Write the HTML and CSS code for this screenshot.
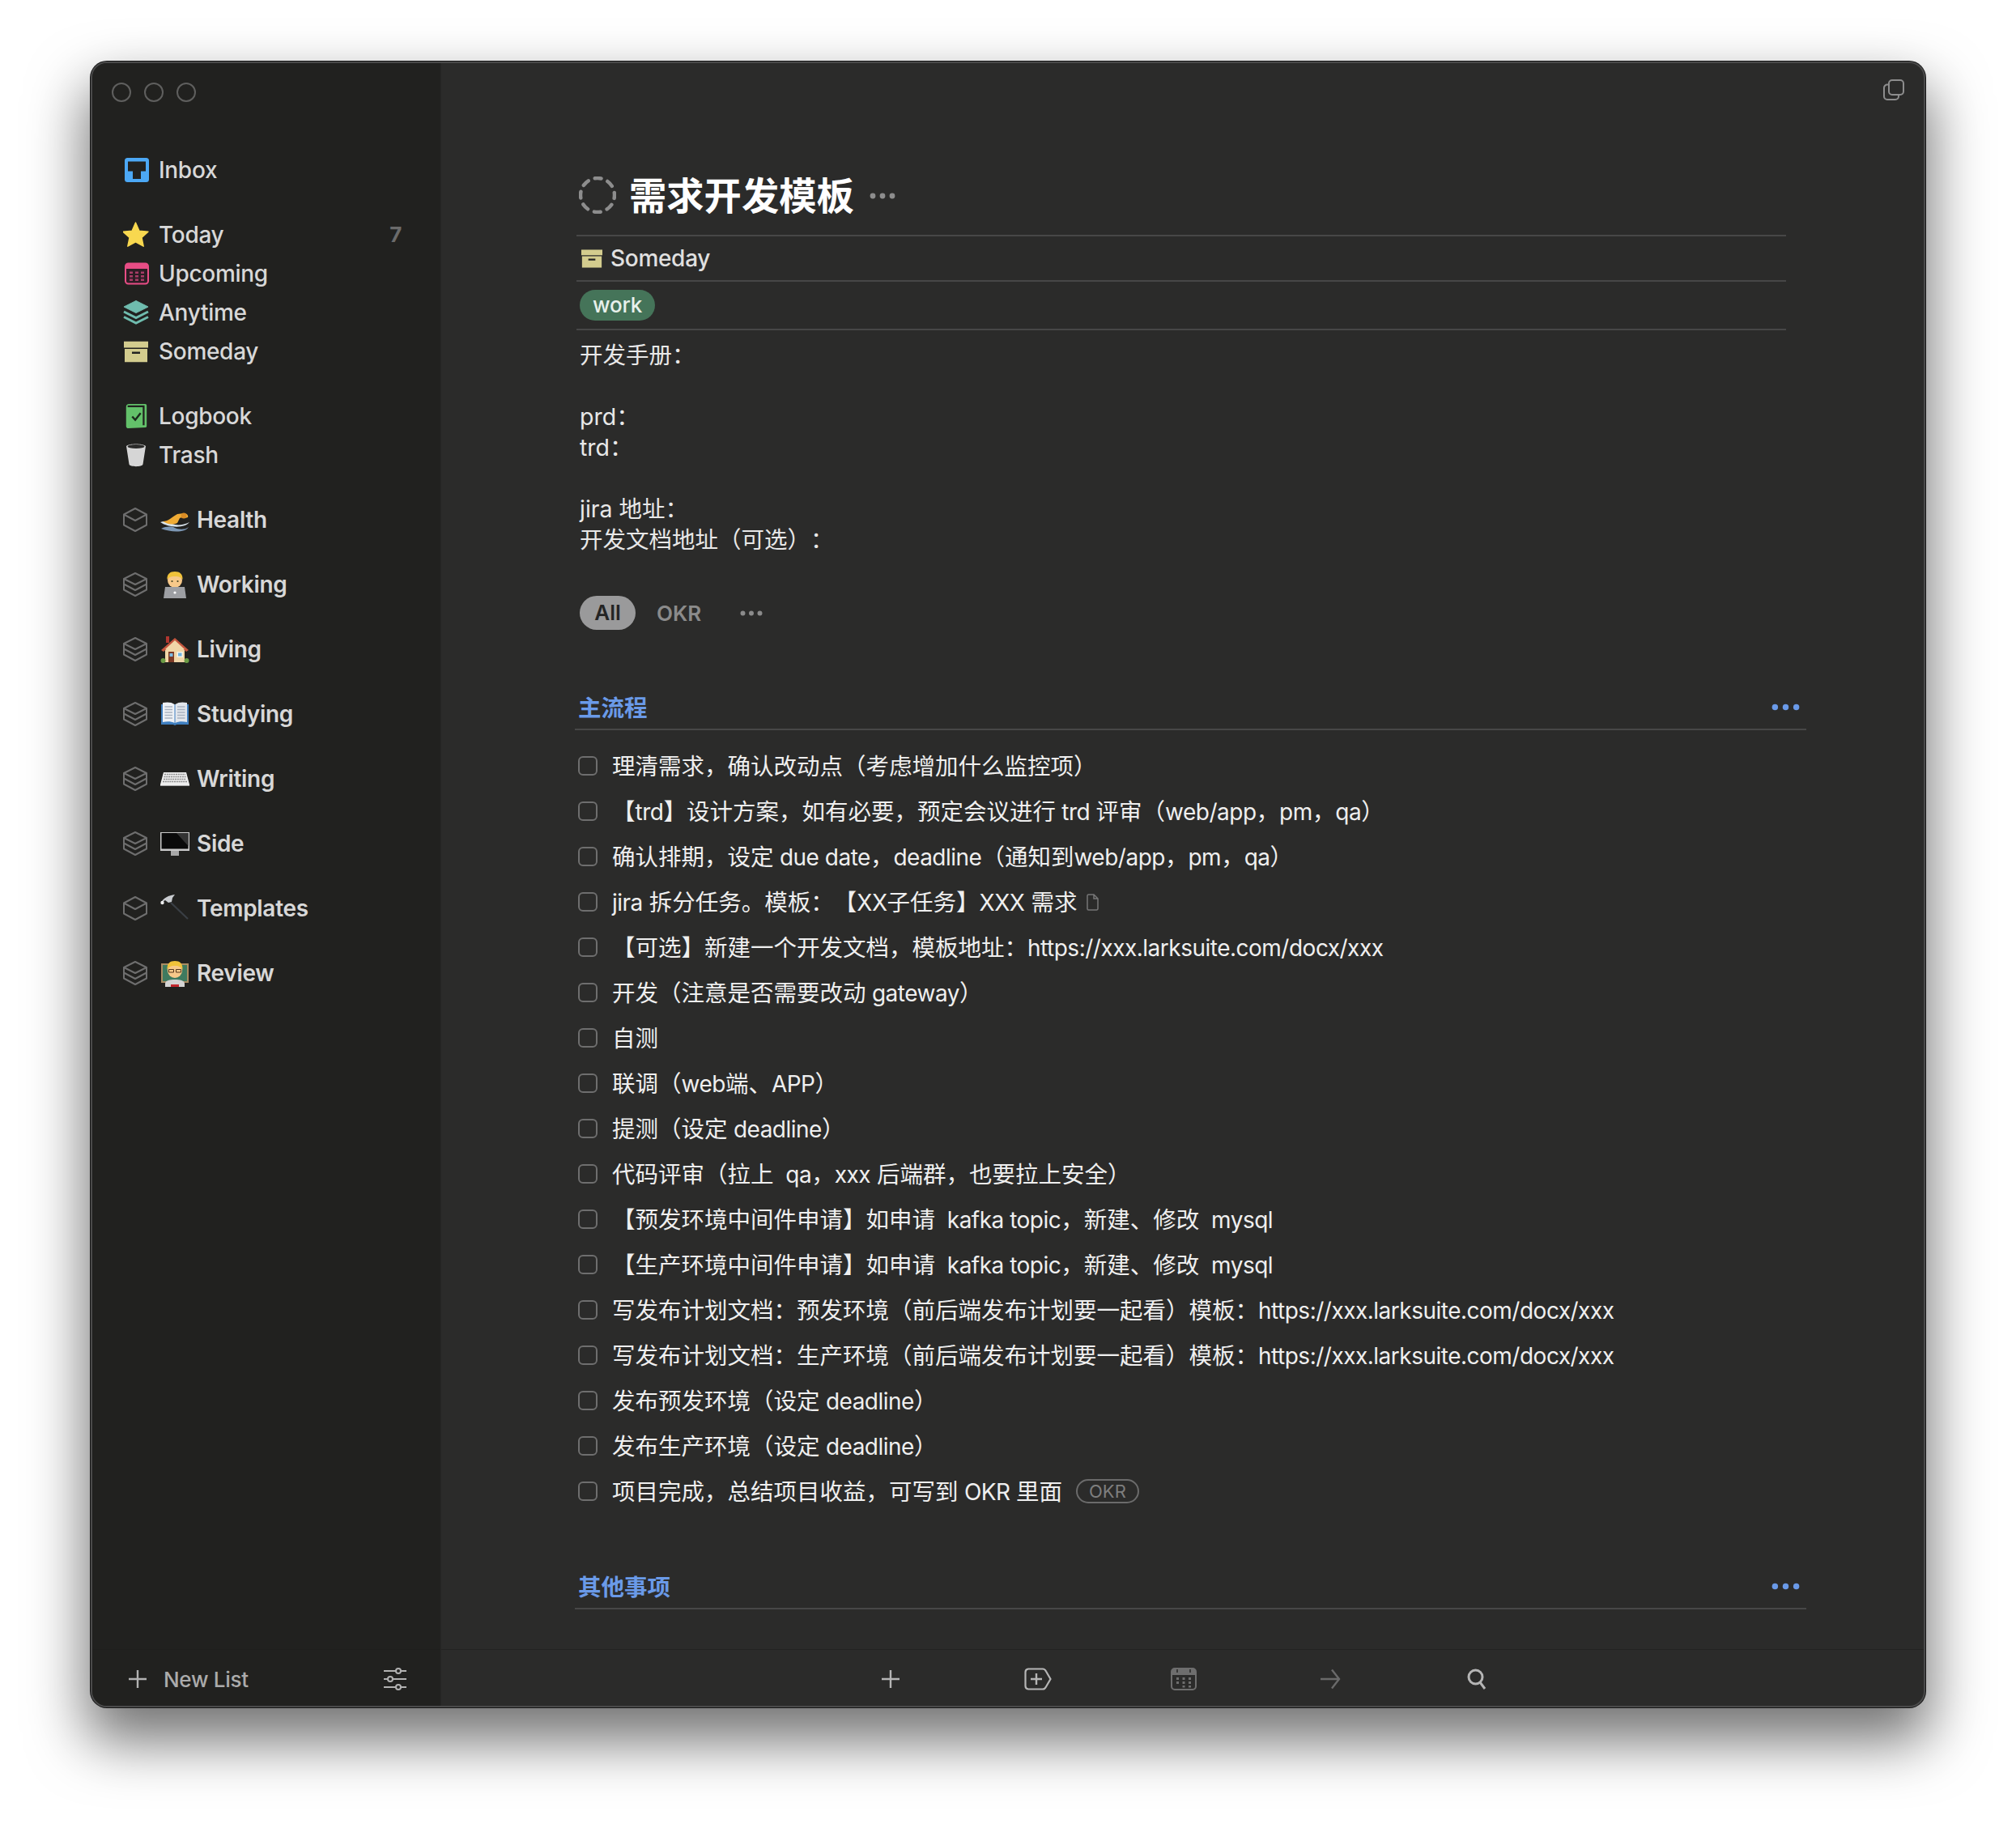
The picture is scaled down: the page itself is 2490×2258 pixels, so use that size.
FILE: index.html
```html
<!DOCTYPE html>
<html lang="zh-CN">
<head>
<meta charset="utf-8">
<title>需求开发模板</title>
<link rel="stylesheet" href="styles.css">
</head>
<body>
<svg class="defs" width="0" height="0">
  <defs>
    <symbol id="box" viewBox="0 0 30 30"><path d="M15 1 29 8.500V21.500L15 29 1 21.500V8.500Z M1 8.500 15 16 29 8.500" fill="none" stroke="#6e6e6e" stroke-width="2" stroke-linejoin="round"/></symbol>
    <symbol id="stack" viewBox="0 0 30 30"><path d="M15 1 29 8 29 21.500 15 29 1 21.500 1 8Z M1 8 15 15 29 8 M1 14.500 15 22 29 14.500" fill="none" stroke="#6e6e6e" stroke-width="2" stroke-linejoin="round"/></symbol>
    <symbol id="dots" viewBox="0 0 32 8"><circle cx="4" cy="4" r="3.4"/><circle cx="16" cy="4" r="3.4"/><circle cx="28" cy="4" r="3.4"/></symbol>
    <symbol id="someday" viewBox="0 0 30 26"><path d="M0 0H30V8H0Z" fill="#d3cc8e"/><path d="M1 9.500H29V26H1Z" fill="#d3cc8e"/><path d="M10 13H20V15.500H10Z" fill="#222"/></symbol>
  </defs>
</svg>
<div class="window">
  <aside class="sidebar">
    <div class="lights"><span class="light"></span><span class="light"></span><span class="light"></span></div>
    <nav class="nav">
      <div class="group">
        <div class="row"><svg class="icon" viewBox="-2 -1 32 32"><rect width="30" height="30" rx="3.500" fill="#4ca8f5"/><path d="M4 4.500H26V16.500H20V26H10V16.500H4Z" fill="#21211f"/></svg><span>Inbox</span></div>
      </div>
      <div class="group">
        <div class="row"><svg class="icon" viewBox="0 0 32 32"><path d="M15.500 1 20 11.200 31 12.300 23 19.400 25.200 30.200 15.500 24.800 5.800 30.200 8 19.400 0 12.300 11 11.200Z" fill="#f8d84f" stroke="#f8d84f" stroke-width="1.400" stroke-linejoin="round"/></svg><span>Today</span><span class="count">7</span></div>
        <div class="row"><svg class="icon" viewBox="-2 -1.500 32 32"><rect x="1" y="2" width="28" height="25" rx="3.500" fill="#2c1d24" stroke="#e84d85" stroke-width="2"/><path d="M1 5.500a3.500 3.500 0 0 1 3.500-3.500h21a3.500 3.500 0 0 1 3.500 3.500V8.500H1Z" fill="#e84d85"/><g fill="#a83c66"><rect x="6" y="12" width="4" height="2.500"/><rect x="13" y="12" width="4" height="2.500"/><rect x="20" y="12" width="4" height="2.500"/><rect x="6" y="16.500" width="4" height="2.500"/><rect x="13" y="16.500" width="4" height="2.500"/><rect x="20" y="16.500" width="4" height="2.500"/><rect x="6" y="21" width="4" height="2.500"/><rect x="13" y="21" width="4" height="2.500"/><rect x="20" y="21" width="4" height="2.500"/></g></svg><span>Upcoming</span></div>
        <div class="row"><svg class="icon" viewBox="0 0 32 30"><path d="M16 .5 31 8 16 15.500 1 8Z" fill="#6fbcae" stroke="#6fbcae" stroke-linejoin="round"/><path d="M1 14 16 21.500 31 14M1 20.500 16 28 31 20.500" fill="none" stroke="#6fbcae" stroke-width="3"/></svg><span>Anytime</span></div>
        <div class="row"><svg class="icon" viewBox="-1 -3.500 32 32"><use href="#someday" width="30" height="26"/></svg><span>Someday</span></div>
      </div>
      <div class="group">
        <div class="row"><svg class="icon" viewBox="0 0 30 34"><path d="M7 1H27a2 2 0 0 1 2 2V30a2 2 0 0 1-2 2L5 33a3 3 0 0 1-3-3V5a4 4 0 0 1 4-4Z" fill="#63c16a"/><path d="M4 4H25V29" fill="none" stroke="#21211f" stroke-width="2.400"/><path d="M10 17.500 14 22 21 13" fill="none" stroke="#1b2a1c" stroke-width="2.600"/></svg><span>Logbook</span></div>
        <div class="row"><svg class="icon" viewBox="-1 -1 32 32"><path d="M3 4C6 .5 24 .5 27 4L23.500 26.500C23 30 7 30 6.500 26.500Z" fill="#d6d6d6"/><ellipse cx="15" cy="4.500" rx="10.500" ry="2.500" fill="#2a2a29"/></svg><span>Trash</span></div>
      </div>
      <div class="group">
        <div class="row area"><svg class="box"><use href="#box"/></svg><svg class="emoji" viewBox="0 0 36 36"><path d="M1 29C7 26 14 26 18 28S30 31 35 27C31 34 14 34 1 29Z" fill="#7c97b4"/><path d="M0 21C8 18 12 23 18 24S30 24 36 21C30 29 10 28 0 21Z" fill="#d9e4ec"/><path d="M3 20C10 20 14 15 21 11L29 10C33 10 35 13 34 15 30 17 27 14 24 16L21 22C14 25 8 23 3 20Z" fill="#f0ac35"/><circle cx="29" cy="13" r="3.500" fill="#d98c25"/></svg><span>Health</span></div>
      </div>
      <div class="group">
        <div class="row area"><svg class="box"><use href="#stack"/></svg><svg class="emoji" viewBox="0 0 36 36"><path d="M5 35V29C5 25 12 24 18 24S31 25 31 29V35Z" fill="#2436a6"/><circle cx="18" cy="13" r="9" fill="#f7c98a"/><path d="M8.500 12C8 5 12 2 18 2S28 5 27.500 12C25 8 21 8 18 8S11 8 8.500 12Z" fill="#f0c23a"/><circle cx="14.500" cy="14" r="1.100" fill="#442"/><circle cx="21.500" cy="14" r="1.100" fill="#442"/><path d="M6 21H30L32 35H4Z" fill="#9d9fa3"/><circle cx="18" cy="28" r="1.600" fill="#fff"/></svg><span>Working</span></div>
      </div>
      <div class="group">
        <div class="row area"><svg class="box"><use href="#stack"/></svg><svg class="emoji" viewBox="0 0 36 36"><path d="M7 2H11V10H7Z" fill="#b0362f"/><path d="M6 17H30V34H6Z" fill="#f1d6a8"/><path d="M1 19 18 4 35 19 32 21 18 9 4 21Z" fill="#c4563e"/><path d="M18 7 6 18H30Z" fill="#f1d6a8"/><path d="M10 21H17V34H10Z" fill="#7d3a26"/><path d="M11.500 23H15.500V27H11.500Z" fill="#7bbce6"/><path d="M20.500 21H28V28H20.500Z" fill="#f7f2e4"/><path d="M22 22.500H26.500V26.500H22Z" fill="#6fb2e0"/><circle cx="3.500" cy="32" r="3" fill="#6b9c45"/><circle cx="32.500" cy="32" r="3" fill="#6b9c45"/></svg><span>Living</span></div>
      </div>
      <div class="group">
        <div class="row area"><svg class="box"><use href="#stack"/></svg><svg class="emoji" viewBox="0 0 36 36"><path d="M1 6H35V31H20L18 32 16 31H1Z" fill="#3f7fc0"/><path d="M3 4C8 3 14 3 17.500 6V29C14 27 8 27 3 28Z" fill="#eef1f5"/><path d="M33 4C28 3 22 3 18.500 6V29C22 27 28 27 33 28Z" fill="#e2e6ec"/><path d="M5.500 9H15M5.500 12.500H15M5.500 16H15M5.500 19.500H15M5.500 23H15M21 9H30.500M21 12.500H30.500M21 16H30.500M21 19.500H30.500M21 23H30.500" stroke="#a9b2c0" stroke-width="1.300"/></svg><span>Studying</span></div>
      </div>
      <div class="group">
        <div class="row area"><svg class="box"><use href="#stack"/></svg><svg class="emoji" viewBox="0 0 36 36"><path d="M4 10H32L36 25V27H0V25Z" fill="#eeeeee"/><path d="M5 12.500H31M4.500 15.500H31.500M4 18.500H32M3 21.500H33" stroke="#8b8b8b" stroke-width="1.600" stroke-dasharray="2 .8"/><path d="M0 26H36V27H0Z" fill="#a5a5a5"/></svg><span>Writing</span></div>
      </div>
      <div class="group">
        <div class="row area"><svg class="box"><use href="#stack"/></svg><svg class="emoji" viewBox="0 0 36 36"><path d="M0 4H36V27H0Z" fill="#c9c9c9"/><path d="M1.500 5H34.500V24.500H1.500Z" fill="#0a0a0a"/><path d="M20 5H34.500V21Z" fill="#333"/><path d="M13 27H23V33H13Z" fill="#a8a8a8"/></svg><span>Side</span></div>
      </div>
      <div class="group">
        <div class="row area"><svg class="box"><use href="#box"/></svg><svg class="emoji" viewBox="0 0 36 36"><path d="M13 11 34 31" stroke="#3a3f45" stroke-width="2.200"/><path d="M1 11C4 5 10 2 18 1L15 5 14 10 10 11 6 8Z" fill="#c9ccd0"/><circle cx="2.500" cy="11" r="2.200" fill="#eee"/></svg><span>Templates</span></div>
      </div>
      <div class="group">
        <div class="row area"><svg class="box"><use href="#stack"/></svg><svg class="emoji" viewBox="0 0 36 36"><path d="M1 6H35V30H1Z" fill="#a98c62"/><path d="M3 8H33V28H3Z" fill="#3e7a5f"/><path d="M6 35V31C6 27 12 26 18 26S30 27 30 31V35Z" fill="#d4d4d4"/><path d="M13 32H23V35H13Z" fill="#c1272d"/><circle cx="18" cy="15" r="9" fill="#f7c98a"/><path d="M8.500 14C8 6 12 3 18 3S28 6 27.500 14C25 9 21 9 18 9S11 9 8.500 14Z" fill="#f0c23a"/><path d="M10.500 13.500H16.500V17H10.500ZM19.500 13.500H25.500V17H19.500Z" fill="none" stroke="#55361c" stroke-width="1"/></svg><span>Review</span></div>
      </div>
    </nav>
    <footer class="side-foot">
      <svg class="foot-plus" viewBox="0 0 24 24"><path d="M12 1V23M1 12H23" stroke="#b2b2b2" stroke-width="2.400"/></svg>
      <span class="new-list">New List</span>
      <svg class="sliders" viewBox="0 0 28 28"><g fill="none" stroke="#b2b2b2" stroke-width="2"><path d="M0 4H15M21 4H28M0 14H5M11 14H28M0 24H15M21 24H28"/><circle cx="18" cy="4" r="3"/><circle cx="8" cy="14" r="3"/><circle cx="18" cy="24" r="3"/></g></svg>
    </footer>
  </aside>
  <main class="main">
    <div class="top-bar"><svg class="copy" viewBox="0 0 26 26"><g fill="none" stroke="#8d8d8d" stroke-width="2"><rect x="7" y="1" width="18" height="18" rx="4"/><path d="M7 6.500H5A4 4 0 0 0 1 10.500V21A4 4 0 0 0 5 25H15A4 4 0 0 0 19 21V19"/></g></svg></div>
    <div class="scroll">
      <div class="details">
        <div class="title-row">
          <svg class="spin" viewBox="0 0 46 46"><circle cx="23" cy="23" r="21" fill="none" stroke="#8d8d8d" stroke-width="4.500" stroke-linecap="round" stroke-dasharray="8 8.490" stroke-dashoffset="4"/></svg>
          <h1 class="title">需求开发模板</h1>
          <svg class="dots title-dots"><use href="#dots"/></svg>
        </div>
        <div class="meta-row"><svg class="meta-icon" viewBox="0 0 30 26"><use href="#someday" width="30" height="26"/></svg><span>Someday</span></div>
        <div class="tag-row"><span class="tag">work</span></div>
      </div>
      <div class="notes">开发手册：

prd：
trd：

jira 地址：
开发文档地址（可选）：</div>
      <div class="filters">
        <span class="pill">All</span>
        <span class="filter">OKR</span>
        <svg class="dots filter-dots"><use href="#dots"/></svg>
      </div>
      <section class="section">
        <header class="section-head"><h2>主流程</h2><svg class="dots blue-dots"><use href="#dots"/></svg></header>
        <ul class="todos">
          <li class="todo"><span class="check"></span><span class="text">理清需求，确认改动点（考虑增加什么监控项）</span></li>
          <li class="todo"><span class="check"></span><span class="text">【<span class="lat">trd</span>】设计方案，如有必要，预定会议进行<span class="lat"> trd </span>评审（<span class="lat">web/app</span>，<span class="lat">pm</span>，<span class="lat">qa</span>）</span></li>
          <li class="todo"><span class="check"></span><span class="text">确认排期，设定<span class="lat"> due date</span>，<span class="lat">deadline</span>（通知到<span class="lat">web/app</span>，<span class="lat">pm</span>，<span class="lat">qa</span>）</span></li>
          <li class="todo"><span class="check"></span><span class="text"><span class="lat">jira</span> 拆分任务。模板：【<span class="lat">XX</span>子任务】<span class="lat">XXX</span> 需求</span><svg class="doc" viewBox="0 0 15 21"><path d="M1 2.500A1.500 1.500 0 0 1 2.500 1H9L14 6V18.500A1.500 1.500 0 0 1 12.500 20H2.500A1.500 1.500 0 0 1 1 18.500ZM9 1V6H14" fill="none" stroke="#777" stroke-width="1.500"/></svg></li>
          <li class="todo"><span class="check"></span><span class="text">【可选】新建一个开发文档，模板地址：<span class="lat">https://xxx.larksuite.com/docx/xxx</span></span></li>
          <li class="todo"><span class="check"></span><span class="text">开发（注意是否需要改动<span class="lat"> gateway</span>）</span></li>
          <li class="todo"><span class="check"></span><span class="text">自测</span></li>
          <li class="todo"><span class="check"></span><span class="text">联调（<span class="lat">web</span>端、<span class="lat">APP</span>）</span></li>
          <li class="todo"><span class="check"></span><span class="text">提测（设定<span class="lat"> deadline</span>）</span></li>
          <li class="todo"><span class="check"></span><span class="text">代码评审（拉上<span class="lat">  qa</span>，<span class="lat">xxx</span> 后端群，也要拉上安全）</span></li>
          <li class="todo"><span class="check"></span><span class="text">【预发环境中间件申请】如申请<span class="lat">  kafka topic</span>，新建、修改<span class="lat">  mysql</span></span></li>
          <li class="todo"><span class="check"></span><span class="text">【生产环境中间件申请】如申请<span class="lat">  kafka topic</span>，新建、修改<span class="lat">  mysql</span></span></li>
          <li class="todo"><span class="check"></span><span class="text">写发布计划文档：预发环境（前后端发布计划要一起看）模板：<span class="lat">https://xxx.larksuite.com/docx/xxx</span></span></li>
          <li class="todo"><span class="check"></span><span class="text">写发布计划文档：生产环境（前后端发布计划要一起看）模板：<span class="lat">https://xxx.larksuite.com/docx/xxx</span></span></li>
          <li class="todo"><span class="check"></span><span class="text">发布预发环境（设定<span class="lat"> deadline</span>）</span></li>
          <li class="todo"><span class="check"></span><span class="text">发布生产环境（设定<span class="lat"> deadline</span>）</span></li>
          <li class="todo"><span class="check"></span><span class="text">项目完成，总结项目收益，可写到<span class="lat"> OKR </span>里面</span><span class="okr">OKR</span></li>
        </ul>
      </section>
      <section class="section section-second">
        <header class="section-head"><h2>其他事项</h2><svg class="dots blue-dots"><use href="#dots"/></svg></header>
      </section>
    </div>
    <footer class="toolbar">
      <span class="tool"><svg class="t-plus" viewBox="0 0 24 24"><path d="M12 1V23M1 12H23" stroke="#b5b5b5" stroke-width="2.400"/></svg></span>
      <span class="tool"><svg class="t-add" viewBox="0 0 34 28"><path d="M5 1.500H23C25 1.500 26 2.500 27 4.500L32.500 14 27 23.500C26 25.500 25 26.500 23 26.500H5A4 4 0 0 1 1.500 22.500V5.500A4 4 0 0 1 5 1.500Z" fill="none" stroke="#b5b5b5" stroke-width="2.200"/><path d="M15 7V21M8 14H22" stroke="#b5b5b5" stroke-width="2.400"/></svg></span>
      <span class="tool"><svg class="t-cal" viewBox="0 0 32 28"><rect x="1" y="1" width="30" height="26" rx="4" fill="none" stroke="#6e6e6e" stroke-width="2"/><path d="M1 5A4 4 0 0 1 5 1H27A4 4 0 0 1 31 5V9H1Z" fill="#6e6e6e"/><path d="M8 2V6M24 2V6" stroke="#2b2b2a" stroke-width="1.600"/><g fill="#6e6e6e"><rect x="7" y="12" width="3" height="3"/><rect x="14.500" y="12" width="3" height="3"/><rect x="22" y="12" width="3" height="3"/><rect x="7" y="17" width="3" height="3"/><rect x="14.500" y="17" width="3" height="3"/><rect x="22" y="17" width="3" height="3"/><rect x="14.500" y="22" width="3" height="2.500"/><rect x="22" y="22" width="3" height="2.500"/></g></svg></span>
      <span class="tool"><svg class="t-arrow" viewBox="0 0 26 26"><path d="M1 13H24M15 1.500 24 13 15 24.500" fill="none" stroke="#6a6a6a" stroke-width="2.400"/></svg></span>
      <span class="tool"><svg class="t-search" viewBox="0 0 24 26"><circle cx="10.500" cy="10.500" r="8.500" fill="none" stroke="#b5b5b5" stroke-width="3"/><path d="M16 17 22 25" stroke="#b5b5b5" stroke-width="3"/></svg></span>
    </footer>
  </main>
</div>
</body>
</html>
```
FILE: styles.css
```css
* { box-sizing: border-box; }
html, body { margin: 0; padding: 0; }
body {
  width: 2490px;
  height: 2258px;
  overflow: hidden;
  background: #fff;
  padding: 76px 112px 0;
  font-family: "Inter", "Noto Sans CJK SC", sans-serif;
  font-size: 28px;
  text-spacing-trim: space-all;
}
.defs { display: block; height: 0; }
.window {
  width: 2266px;
  height: 2033px;
  display: flex;
  border: 2px solid #4a4a4a;
  border-radius: 20px;
  overflow: hidden;
  background: #2b2b2a;
  box-shadow: 0 0 0 1px #151515, 0 36px 70px 6px rgba(0, 0, 0, 0.55);
}
.sidebar {
  width: 431px;
  flex: none;
  display: flex;
  flex-direction: column;
  background: #21211f;
  border-right: 1px solid #272726;
}
.lights { display: flex; gap: 16px; padding: 24px 24px 60px; }
.light { width: 24px; height: 24px; border: 2px solid #5f5f5e; border-radius: 50%; }
.nav { flex: 1; display: flex; flex-direction: column; gap: 32px; }
.row {
  height: 48px;
  display: flex;
  align-items: center;
  padding: 0 48px 0 38px;
  color: #d8d8d8;
  font-weight: 550;
  line-height: 48px;
  letter-spacing: -0.3px;
}
.icon { width: 32px; height: 32px; margin-right: 12px; flex: none; }
.count { margin-left: auto; color: #6b6b6b; font-weight: 700; font-size: 26px; }
.box { width: 30px; height: 30px; flex: none; margin-right: 16px; }
.emoji { width: 36px; height: 36px; flex: none; margin-right: 9px; }
.area span { font-weight: 600; }
.side-foot {
  height: 70px;
  flex: none;
  display: flex;
  align-items: center;
  padding: 3px 42px 0 44px;
  border-top: 1px solid #1e1e1d;
  color: #ababab;
}
.foot-plus { width: 24px; height: 24px; margin-right: 20px; }
.new-list { font-size: 26px; font-weight: 500; letter-spacing: -0.3px; }
.sliders { width: 28px; height: 28px; margin-left: auto; }
.main { flex: 1; min-width: 0; display: flex; flex-direction: column; }
.top-bar { display: flex; justify-content: flex-end; padding: 20px 24px 0 0; }
.copy { width: 26px; height: 26px; }
.scroll { flex: 1; min-height: 0; overflow: hidden; padding: 68px 145px 0 165px; }
.details { margin: 0 25px 0 2px; }
.title-row {
  height: 100px;
  display: flex;
  align-items: center;
  padding: 0 0 0 3px;
  border-bottom: 2px solid #474747;
}
.spin { width: 46px; height: 46px; margin-right: 16px; }
.title { margin: 1px 0 0; color: #fff; font-size: 46.3px; font-weight: 700; line-height: 60px; }
.dots { fill: currentColor; }
.title-dots { width: 32px; height: 8px; margin: 2px 0 0 19px; color: #8d8d8d; }
.meta-row {
  height: 56px;
  display: flex;
  align-items: center;
  padding-left: 6px;
  border-bottom: 2px solid #474747;
  color: #e0e0e0;
  font-weight: 500;
  letter-spacing: -0.3px;
}
.meta-icon { width: 26px; height: 23px; margin-right: 10px; }
.tag-row {
  height: 60px;
  display: flex;
  align-items: center;
  padding-left: 4px;
  border-bottom: 2px solid #474747;
}
.tag {
  height: 38px;
  padding: 0 16px;
  border-radius: 19px;
  background: #457459;
  color: #e8f0eb;
  font-weight: 500;
  font-size: 26px;
  line-height: 38px;
  letter-spacing: -0.2px;
}
.notes {
  margin: 12px 0 0 6px;
  color: #e8e8e8;
  font-size: 28.5px;
  line-height: 38px;
  white-space: pre-line;
}
.lat { font-size: 28px; letter-spacing: -0.5px; white-space: pre; }
.filters { display: flex; align-items: center; height: 42px; margin: 50px 0 0 6px; }
.pill {
  width: 69px;
  height: 42px;
  border-radius: 21px;
  background: #9a9a9b;
  color: #242424;
  font-size: 26px;
  font-weight: 600;
  line-height: 42px;
  text-align: center;
}
.filter { margin-left: 26px; color: #8b8b8b; font-size: 26px; font-weight: 600; }
.filter-dots { width: 28px; height: 7px; margin-left: 48px; color: #8b8b8b; }
.section { margin-top: 69px; }
.section-second { margin-top: 63px; }
.section-head {
  height: 55px;
  display: flex;
  align-items: center;
  justify-content: space-between;
  padding: 0 8px 0 4px;
  border-bottom: 2px solid #474747;
}
.section-head h2 { margin: 0 0 3px; color: #6a9ae8; font-size: 28.5px; font-weight: 700; }
.blue-dots { width: 35px; height: 9px; color: #6a9ae8; }
.todos { list-style: none; margin: 0; padding: 16px 0 0 4px; }
.todo { height: 56px; display: flex; align-items: center; color: #efefef; }
.check {
  width: 24px;
  height: 24px;
  flex: none;
  margin-right: 18px;
  border: 2px solid #6e6e6e;
  border-radius: 6px;
}
.text { white-space: pre; font-size: 28.5px; padding-bottom: 3px; }
.doc { width: 15px; height: 21px; margin-left: 12px; }
.okr {
  margin-left: 17px;
  height: 30px;
  padding: 0 14px;
  border: 2px solid #6b6b6b;
  border-radius: 15px;
  color: #7e7e7e;
  font-size: 22px;
  line-height: 26px;
}
.toolbar {
  height: 70px;
  flex: none;
  display: flex;
  justify-content: center;
  align-items: center;
  padding: 3px 0 0 3px;
  border-top: 1px solid #222221;
}
.tool { width: 181px; display: flex; justify-content: center; }
.t-plus { width: 24px; height: 24px; }
.t-add { width: 34px; height: 28px; margin-left: 2px; }
.t-cal { width: 32px; height: 28px; }
.t-arrow { width: 26px; height: 26px; }
.t-search { width: 24px; height: 26px; margin-right: 1px; }
```
